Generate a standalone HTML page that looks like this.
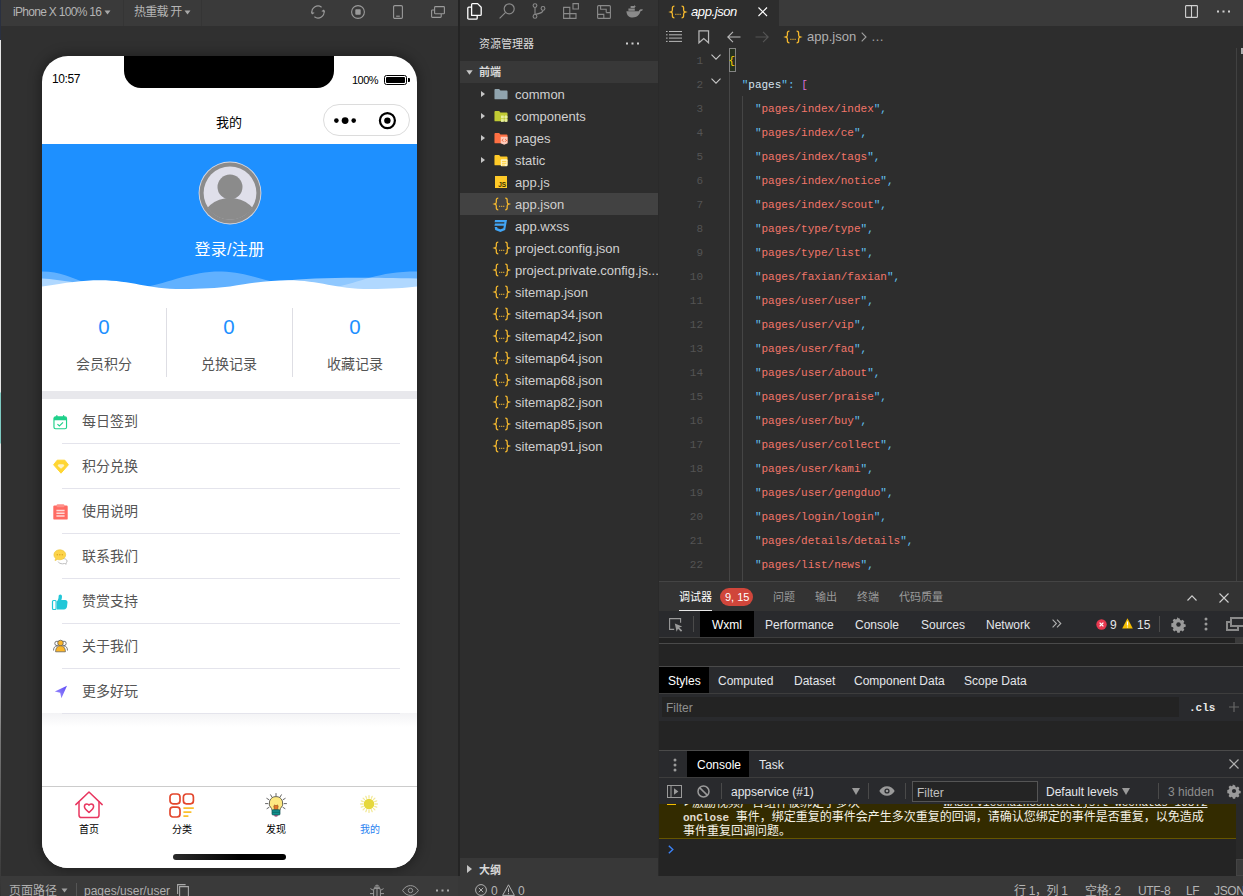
<!DOCTYPE html>
<html lang="zh-CN">
<head>
<meta charset="utf-8">
<title>app.json</title>
<style>
*{box-sizing:border-box;margin:0;padding:0}
html,body{width:1243px;height:896px;overflow:hidden;background:#2e2e2e}
body{font-family:"Liberation Sans","Noto Sans CJK SC",sans-serif;font-size:12px;color:#ccc;position:relative}
div,span,svg,i{position:absolute;display:block}
.t{white-space:nowrap;line-height:20px;height:20px}
.c{transform:translateX(-50%)}
svg{overflow:visible}
/* simulator */
#sim{left:0;top:0;width:458px;height:896px;background:#303030;overflow:hidden}
#simbar{left:0;top:0;width:458px;height:26px;background:#3a3a3a}
#simbar .t{font-size:12px;color:#b4b4b4;top:2px}
#simfoot{left:0;top:876px;width:458px;height:20px;background:#3a3a3a}
#simfoot .t{font-size:12px;color:#b0b0b0;top:5px}
#phone{left:42px;top:56px;width:375px;height:812px;background:#fff;border-radius:26px;overflow:hidden}
#pshadow{left:42px;top:56px;width:375px;height:812px;border-radius:26px;box-shadow:0 0 12px 2px rgba(0,0,0,.35)}
#notch{left:82px;top:0;width:210px;height:32px;background:#000;border-radius:0 0 17px 17px}
#hero{left:0;top:88px;width:375px;height:146px;background:#1e90ff}
#phone .t{color:#000}
.num{font-size:20.500px;color:#1e90ff !important;top:261.300px}
.lab{font-size:14px;color:#555 !important;top:298px}
.vdiv{width:1px;top:252px;height:69px;background:#dedee4}
#gap{left:0;top:335px;width:375px;height:8px;background:#e8e8ec}
.row{left:0;width:375px;height:45px}
.row .t{left:40px;top:12px;font-size:14px;color:#555 !important}
.row i{left:20px;right:17px;bottom:0;height:1px;background:#e4e4ec}
.row svg{left:10.500px;top:15.200px}
#tabbar{left:0;top:730px;width:375px;height:82px;background:#fff;border-top:1px solid #ccc}
#tabbar .t{font-size:10px;top:33px}
/* middle */
#mid{left:458px;top:0;width:200px;height:896px;background:#2d2d2d;overflow:hidden}
#mid .edge{left:0;top:0;width:1.500px;height:896px;background:#242424}
#act{left:2px;top:0;width:198px;height:26px;background:#333}
.tree{left:2px;width:198px;height:22px}
.tree .t{left:55px;top:2px;font-size:13px;color:#d0d0d0}
.tree svg.ic{left:34px;top:4px}
.tree .arr{left:20.500px;top:8px;width:0;height:0;border-left:4px solid #c5c5c5;border-top:3.5px solid transparent;border-bottom:3.5px solid transparent}
.hdr{left:2px;width:198px;height:22px;background:#383838}
.hdr .t{left:19px;top:1px;font-size:11px;font-weight:bold;color:#d8d8d8}
/* editor */
#ed{left:658px;top:0;width:585px;height:581px;background:#2d2d2d;overflow:hidden}
#tabs{left:0;top:0;width:585px;height:26px;background:#3a3a3a}
#tab1{left:1px;top:0;width:120px;height:26px;background:#2d2d2d}
.ln{left:0;width:585px;height:24px;font-family:"Liberation Mono",monospace;font-size:11px;line-height:24px;white-space:pre}
.ln b{position:absolute;top:.5px;left:27px;width:18px;text-align:right;font-weight:normal;color:#545454;font-size:11px}
.ln u{position:absolute;top:.5px;left:70.5px;text-decoration:none;color:#62c0f0}
.ln u s{text-decoration:none;color:#f2766a}
.ln u em{font-style:normal;color:#d6e2ee}
/* debugger */
#dbg{left:658px;top:582px;width:585px;height:294px;background:#242424;overflow:hidden}
#dbg .t{font-size:12px;color:#e4e6ea}
#status{left:458px;top:876px;width:785px;height:20px;background:#383838}
#status .t{font-size:12px;color:#b4b4b4;top:5px;letter-spacing:-.35px}
</style>
</head>
<body>
<div id="sim">
  <div id="simbar">
    <span class="t" style="left:13px;letter-spacing:-.7px">iPhone X 100% 16</span>
    <svg style="left:104px;top:10px" width="8" height="5" viewBox="0 0 8 5"><path d="M0.5 0.5h6L3.5 4.5z" fill="#a8a8a8"/></svg>
    <span style="left:123px;top:0;width:1px;height:26px;background:#353535"></span>
    <span class="t" style="left:134px;letter-spacing:-.8px">热重载 开</span>
    <svg style="left:184px;top:10px" width="8" height="5" viewBox="0 0 8 5"><path d="M0.5 0.5h6L3.5 4.5z" fill="#a8a8a8"/></svg>
    <span style="left:201px;top:0;width:1px;height:26px;background:#353535"></span>
    <svg style="left:311px;top:5px" width="14" height="14" viewBox="0 0 14 14" fill="none" stroke="#9a9a9a" stroke-width="1.100"><path d="M1.200 8.600A6 6 0 0 1 10.600 2.200M12.800 5.400A6 6 0 0 1 3.400 11.800"/><path d="M0.400 6.600l.9 2.200 1.900-1.200M13.600 7.400l-.9-2.200-1.900 1.200"/></svg>
    <svg style="left:351px;top:5px" width="14" height="14" viewBox="0 0 14 14"><circle cx="7" cy="7" r="6.4" fill="none" stroke="#9a9a9a" stroke-width="1.1"/><rect x="4.3" y="4.3" width="5.4" height="5.4" rx=".8" fill="#9a9a9a"/></svg>
    <svg style="left:393px;top:5px" width="10" height="14" viewBox="0 0 10 14" fill="none" stroke="#9a9a9a" stroke-width="1.1"><rect x=".6" y=".6" width="8.8" height="12.8" rx="1.2"/><path d="M3.2 11.2h3.6"/></svg>
    <svg style="left:431px;top:6px" width="14" height="12" viewBox="0 0 14 12" fill="none" stroke="#9a9a9a" stroke-width="1.1"><rect x="3.6" y=".6" width="9.8" height="7.2" rx=".8"/><path d="M3.4 4H1.4a.8.8 0 0 0-.8.8v5.8a.8.8 0 0 0 .8.8h8a.8.8 0 0 0 .8-.8V8"/></svg>
  </div>
  <div id="pshadow"></div>
  <div id="phone">
    <div id="notch"></div>
    <span class="t" style="left:10px;top:13px;font-size:12px;letter-spacing:-.4px">10:57</span>
    <span class="t" style="left:310px;top:14px;font-size:11px;letter-spacing:-.5px">100%</span>
    <span style="left:342px;top:19px;width:23px;height:10px;border:1px solid #000;border-radius:2.5px"></span>
    <span style="left:344px;top:21px;width:19px;height:6px;background:#000;border-radius:1px"></span>
    <span style="left:366px;top:22px;width:2px;height:4px;background:#000;border-radius:0 1px 1px 0"></span>
    <span class="t c" style="left:187px;top:56.500px;font-size:13px">我的</span>
    <div style="left:281px;top:48px;width:87px;height:32px;border:1px solid #dcdcdc;border-radius:16px;background:#fff"></div>
    <svg style="left:281px;top:48px" width="87" height="32" viewBox="0 0 87 32"><circle cx="13.4" cy="16.6" r="2.3"/><circle cx="22.1" cy="16.6" r="3.4"/><circle cx="30.7" cy="16.6" r="2.3"/><circle cx="64.4" cy="16.6" r="7.5" fill="none" stroke="#000" stroke-width="2.200"/><circle cx="64.4" cy="16.6" r="3.2"/></svg>
    <div id="hero"></div>
    <svg style="left:0;top:200px" width="375" height="40" viewBox="0 0 375 40">
      <path d="M0 15.5C18 15.5 30 22 42 26L42 40 0 40zM100 32C130 26 150 15 180 15.5C200 16 215 22 232 26L232 40 100 40zM290 32C320 26 335 15.5 375 15.5L375 40 290 40z" fill="#fff" fill-opacity=".3"/>
      <path d="M0 22.5C10 23 20 24.5 30 26L30 40 0 40zM240 25C270 21.5 310 21 375 22.5L375 40 240 40z" fill="#fff" fill-opacity=".5"/>
      <path d="M0 30.5C25 26.5 40 24.2 58 24.2C90 24.2 105 33 140 33C160 33 175 32 188 30.5C213 26.5 228 24.2 246 24.2C278 24.2 293 33 328 33C348 33 363 32 375 30.5L375 40 0 40z" fill="#fff"/>
    </svg>
    <svg style="left:155.600px;top:105px" width="64" height="64" viewBox="0 0 64 64">
      <defs><clipPath id="avc"><circle cx="32" cy="32" r="26.800"/></clipPath></defs>
      <circle cx="32" cy="32" r="31.400" fill="#d9d9e2"/>
      <circle cx="32" cy="32" r="30.500" fill="#8b8b8b"/>
      <circle cx="32" cy="32" r="26.400" fill="#dfdfea"/>
      <g clip-path="url(#avc)" fill="#8b8b8b"><circle cx="32" cy="26" r="12.500"/><ellipse cx="32" cy="61" rx="28" ry="24"/></g>
    </svg>
    <span class="t c" style="left:187.500px;top:183.500px;font-size:16px;letter-spacing:.3px;color:#fff !important;color:#fff">登录/注册</span>
    <span class="t c num" style="left:62px">0</span>
    <span class="t c num" style="left:187px">0</span>
    <span class="t c num" style="left:313px">0</span>
    <span class="t c lab" style="left:62px">会员积分</span>
    <span class="t c lab" style="left:187px">兑换记录</span>
    <span class="t c lab" style="left:313px">收藏记录</span>
    <span class="vdiv" style="left:124px"></span>
    <span class="vdiv" style="left:250px"></span>
    <div id="gap"></div>
    <div style="left:0;top:657px;width:375px;height:14px;background:linear-gradient(#f3f3f5,#fff)"></div>
    <div class="row" style="top:343px"><svg width="14.500" height="14.500" viewBox="0 0 15 15" style="top:15.500px"><rect x="1" y="2" width="13" height="12.2" rx="1.6" fill="#fff" stroke="#1fd08a" stroke-width="1.2"/><path d="M1 3.6a1.6 1.6 0 0 1 1.6-1.6h9.800a1.600 1.600 0 0 1 1.600 1.600V5.400H1z" fill="#1fd08a"/><path d="M4 0.800v2M11 0.800v2" stroke="#1fd08a" stroke-width="1.400" stroke-linecap="round"/><path d="M4.600 9.400l2 2 3.800-3.800" fill="none" stroke="#1fd08a" stroke-width="1.200"/></svg><span class="t">每日签到</span><i></i></div>
    <div class="row" style="top:388px"><svg width="16" height="15" viewBox="0 0 16 15"><path d="M4.200 1.200h7.600L15.400 5.800 8 14.200 0.600 5.800z" fill="#ffd633" stroke="#ffd633" stroke-width="1" stroke-linejoin="round"/><path d="M5.600 5.200h4.800l1 1.600L8 9.800 4.600 6.800z" fill="#fff3c4"/></svg><span class="t">积分兑换</span><i></i></div>
    <div class="row" style="top:433px"><svg width="15" height="16" viewBox="0 0 15 16"><rect x="0.300" y="1.600" width="14.400" height="14" rx="1.200" fill="#ff6b63"/><rect x="3.600" y="0.300" width="7.800" height="3" rx="1" fill="#ff8f88"/><path d="M3.400 6.400h8.200M3.400 9.200h8.200M3.400 12h8.200" stroke="#ffd9d6" stroke-width="1.500"/></svg><span class="t">使用说明</span><i></i></div>
    <div class="row" style="top:478px"><svg width="16" height="15" viewBox="0 0 16 15"><path d="M9.500 9.500c2.600 0 4.600 1 4.600 2.600 0 .8-.5 1.400-1.200 1.900l.3 1.200-1.700-.7c-.6.200-1.300.3-2 .3-2 0-3.900-.9-4.400-2.200" fill="#fff" stroke="#b8b8b8" stroke-width=".9"/><path d="M6.800 0.800c3.300 0 5.900 2.200 5.900 5s-2.600 5-5.900 5c-.8 0-1.600-.1-2.300-.4L2 11.600l.6-2.300C1.500 8.400 0.900 7.200 0.900 5.800c0-2.800 2.600-5 5.900-5z" fill="#fdd44a" stroke="#e8c23a" stroke-width=".6"/><circle cx="4.300" cy="5.800" r=".7" fill="#d9a520"/><circle cx="6.800" cy="5.800" r=".7" fill="#d9a520"/><circle cx="9.300" cy="5.800" r=".7" fill="#d9a520"/></svg><span class="t">联系我们</span><i></i></div>
    <div class="row" style="top:523px"><svg width="16" height="16" viewBox="0 0 16 16" style="left:9.500px"><rect x="0.500" y="6.500" width="3.600" height="9" rx="1" fill="#fff" stroke="#22c7d8" stroke-width="1.200"/><path d="M5 7.200c1.200-1.400 1.600-3 1.600-4.800 0-1.200.8-1.900 1.700-1.900 1 0 1.700.8 1.700 2.200 0 1.200-.3 2.300-.7 3.200h4c1.400 0 2.300 1 2.200 2.300l-.5 4.400c-.2 1.700-1.300 2.900-3 2.900H5z" fill="#22c7d8"/></svg><span class="t">赞赏支持</span><i></i></div>
    <div class="row" style="top:568px"><svg width="15" height="14" viewBox="0 0 15 14" style="top:15px"><circle cx="4" cy="4.400" r="2.200" fill="#fff" stroke="#555" stroke-width=".8"/><circle cx="11" cy="4.400" r="2.200" fill="#fff" stroke="#555" stroke-width=".8"/><path d="M0.500 11.500c0-3 1.500-4.500 3.500-4.500M14.500 11.500c0-3-1.500-4.500-3.500-4.500" fill="none" stroke="#555" stroke-width=".8"/><circle cx="7.500" cy="4" r="2.800" fill="#fcb62a" stroke="#555" stroke-width=".7"/><path d="M2.600 12.800c0-4 2-6 4.900-6s4.900 2 4.900 6z" fill="#fcb62a" stroke="#555" stroke-width=".7"/></svg><span class="t">关于我们</span><i></i></div>
    <div class="row" style="top:613px"><svg width="14" height="14" viewBox="0 0 14 14" style="left:11.500px;top:16px"><defs><linearGradient id="pl" x1="1" y1="0" x2="0" y2="1"><stop offset="0" stop-color="#5b48f5"/><stop offset="1" stop-color="#a79bff"/></linearGradient></defs><path d="M13 0.800L0.800 6.400l5.400 1.400 1.200 5.400z" fill="url(#pl)"/></svg><span class="t">更多好玩</span><i></i></div>
    <div id="tabbar">
      <svg style="left:33px;top:4px" width="28" height="28" viewBox="0 0 28 28" fill="none" stroke="#e8365f" stroke-width="1.500" stroke-linecap="round" stroke-linejoin="round"><path d="M0.800 13.600L14 1 27.200 13.600"/><path d="M4 11v13a2.600 2.600 0 0 0 2.600 2.600h14.800a2.600 2.600 0 0 0 2.600-2.600v-13"/><path d="M14 21.400c-2.400-1.800-4.600-3.400-4.600-5.800 0-1.600 1.200-2.700 2.500-2.700.9 0 1.700.5 2.100 1.300.4-.8 1.200-1.300 2.100-1.300 1.300 0 2.500 1.100 2.500 2.700 0 2.400-2.200 4-4.600 5.800z"/></svg>
      <svg style="left:127px;top:6px" width="26" height="25" viewBox="0 0 26 25" fill="none"><rect x="1" y="1" width="10" height="9.800" rx="3" stroke="#e3472d" stroke-width="1.700"/><rect x="14.400" y="1" width="10" height="9.800" rx="3" stroke="#e3472d" stroke-width="1.700"/><rect x="1" y="14.200" width="10" height="9.800" rx="3" stroke="#e3472d" stroke-width="1.700"/><path d="M14.400 15.200h10.400M14.400 19.200h8M14.400 23.200h5" stroke="#fbc02d" stroke-width="1.700"/></svg>
      <svg style="left:223px;top:6px" width="22" height="24" viewBox="0 0 22 24"><g stroke="#666" stroke-width="1" stroke-linecap="round"><path d="M11 0.500v2.400M5.600 1.800l1.200 2M16.400 1.800l-1.200 2M1.800 5.400l2 1.200M20.200 5.400l-2 1.200M0.500 10.600h2.400M21.500 10.600h-2.400M2 15.600l2-1.200M20 15.600l-2-1.200"/></g><path d="M11 3.600a6.800 6.800 0 0 1 4.400 12l-.4 1.800H7l-.4-1.800A6.800 6.800 0 0 1 11 3.600z" fill="#fde982" stroke="#444" stroke-width=".8"/><path d="M9.400 16.800l-.6-4 1.200-1 1 1.200 1-1.200 1.200 1-.6 4z" fill="#e0782a" stroke="#7a3b10" stroke-width=".5"/><rect x="7" y="16.800" width="8" height="5.200" rx="1" fill="#12908e" stroke="#0b4f4e" stroke-width=".7"/><path d="M7.200 19.300h7.600" stroke="#0b5b5a" stroke-width=".7"/><path d="M9 22.200h4l-.8 1.400h-2.400z" fill="#7a3060"/></svg>
      <svg style="left:318px;top:8px" width="18" height="18" viewBox="0 0 18 18"><g stroke="#f3ea9a" stroke-width="1.300" stroke-linecap="round"><path d="M9 0.600v2.200M9 15.200v2.200M0.600 9h2.200M15.200 9h2.200M3.100 3.100l1.500 1.500M13.400 13.400l1.500 1.500M3.100 14.900l1.500-1.500M13.400 4.600l1.500-1.500M5.800 1.300l.8 2M11.400 14.700l.8 2M1.300 12.200l2-.8M14.700 6.600l2-.8M1.300 5.800l2 .8M14.700 11.400l2 .8M12.200 1.300l-.8 2M6.600 14.700l-.8 2"/></g><circle cx="9" cy="9" r="5.300" fill="#e6d83c"/></svg>
      <span class="t c" style="left:47px">首页</span>
      <span class="t c" style="left:140px">分类</span>
      <span class="t c" style="left:234px">发现</span>
      <span class="t c" style="left:328px;color:#2a82f0">我的</span>
    </div>
    <div style="left:131px;top:798px;width:113px;height:6px;border-radius:3px;background:linear-gradient(90deg,#2a2a2a,#000 60%)"></div>
  </div>
  <div id="simfoot">
    <span class="t" style="left:9px">页面路径</span>
    <svg style="left:61px;top:12px" width="8" height="5" viewBox="0 0 8 5"><path d="M0.500 0.500h6L3.500 4.500z" fill="#a0a0a0"/></svg>
    <span style="left:76px;top:7px;width:1px;height:13px;background:#555"></span>
    <span class="t" style="left:84px">pages/user/user</span>
    <svg style="left:177px;top:8px" width="12" height="12" viewBox="0 0 12 12" fill="none" stroke="#a8a8a8" stroke-width="1.100"><path d="M2.600 12V2.600h8.800V12"/><path d="M0.600 10V0.600h8"/></svg>
    <svg style="left:369px;top:7.500px" width="16" height="13" viewBox="0 0 16 13" fill="none" stroke="#9a9a9a" stroke-width="1"><path d="M4.600 13V6.200a3.400 3.400 0 0 1 6.800 0V13M8 2.800V13M5.200 4.400h5.600M6 2.600a2.100 2.100 0 0 1 4 0M4.600 6.400L1.400 4.600M11.400 6.400l3.200-1.800M4.600 9.600H1M11.400 9.600H15M4.600 12l-2.800 1.600M11.400 12l2.800 1.600"/></svg>
    <svg style="left:402px;top:9px" width="17" height="11" viewBox="0 0 17 11" fill="none" stroke="#9a9a9a" stroke-width="1"><path d="M0.600 5.500C2.600 2.200 5.400 0.600 8.500 0.600s5.900 1.600 7.900 4.900c-2 3.300-4.800 4.900-7.900 4.900S2.600 8.800 0.600 5.500z"/><circle cx="8.500" cy="5.500" r="2.200"/></svg>
    <svg style="left:436px;top:13px" width="13" height="3" viewBox="0 0 13 3" fill="#a8a8a8"><rect x="0" y="0.500" width="2" height="2"/><rect x="5.500" y="0.500" width="2" height="2"/><rect x="11" y="0.500" width="2" height="2"/></svg>
  </div>
  <span style="left:0;top:40px;width:1px;height:856px;background:linear-gradient(#e6e6e6 0,#e6e6e6 352px,#7fcbc3 353px,#7fcbc3 403px,#e0e0e0 404px,#dcdcdc 590px,#777 700px,#484848 800px,#333 856px)"></span>
  <span style="left:0;top:0;width:1px;height:40px;background:#2a3040"></span>
</div>
<div id="mid">
<div class="edge"></div>
<div id="act">
<svg style="left:7px;top:3px" width="15" height="17" viewBox="0 0 15 17" fill="none" stroke="#fff" stroke-width="1.300" stroke-linejoin="round"><path d="M4.600 12.400V1.600a1 1 0 0 1 1-1h5l3.600 3.600v7.200a1 1 0 0 1-1 1z"/><path d="M4.400 4.200H1.800a1 1 0 0 0-1 1v10a1 1 0 0 0 1 1h7.400a1 1 0 0 0 1-1v-2.600"/></svg>
<svg style="left:39px;top:3px" width="16" height="16" viewBox="0 0 16 16" fill="none" stroke="#8a8a8a" stroke-width="1.200"><circle cx="10.200" cy="5.800" r="5"/><path d="M6.600 9.400L0.600 15.400"/></svg>
<svg style="left:72px;top:3px" width="14" height="16" viewBox="0 0 14 16" fill="none" stroke="#8a8a8a" stroke-width="1.100"><circle cx="3" cy="2.600" r="1.900"/><circle cx="3" cy="13.400" r="1.900"/><circle cx="11" cy="5.400" r="1.900"/><path d="M3 4.500v7M11 7.300c0 2.600-3 3-8 4.200"/></svg>
<svg style="left:103px;top:3px" width="16" height="16" viewBox="0 0 16 16" fill="none" stroke="#8a8a8a" stroke-width="1.100"><path d="M0.600 4.400h6.200v6.200H0.600zM0.600 10.600h6.200v4.800H0.600zM6.800 10.600H13v4.800H6.800zM10 0.600h5.400v5.400H10z"/></svg>
<svg style="left:137px;top:5px" width="14" height="14" viewBox="0 0 14 14" fill="none" stroke="#8a8a8a" stroke-width="1.100"><rect x=".6" y=".6" width="12.800" height="12.800" rx="1"/><path d="M3.600 0.600v3.600h5.600v3.400M0.600 9.400h6.200v4M9.200 7.600h4.200"/></svg>
<svg style="left:166px;top:5px" width="17" height="13" viewBox="0 0 17 13"><path d="M0.400 6.200h12.400c.4-1.400 1.400-2 2.600-2 .6 0 1.100.1 1.500.4-.4 1-1.300 1.600-2.400 1.700-.8 3.700-3.600 6.200-7.800 6.200-3.600 0-6-2-6.300-6.300z" fill="#8a8a8a"/><path d="M2.400 3.400h6.400v2.400H2.400zM4.600 1h4.200v2H4.600zM8.200 0l1.600 1.400-1.600 1z" fill="#8a8a8a"/></svg>
</div>
<span class="t" style="left:21px;top:34px;font-size:11px;color:#dcdcdc">资源管理器</span>
<svg style="left:168px;top:42px" width="13" height="3" viewBox="0 0 13 3" fill="#d0d0d0"><rect x="0" y="0.500" width="2" height="2"/><rect x="5.500" y="0.500" width="2" height="2"/><rect x="11" y="0.500" width="2" height="2"/></svg>
<div class="hdr" style="top:61px"><svg style="left:6px;top:9px" width="8" height="5" viewBox="0 0 8 5"><path d="M0.300 0.300h6.400L3.500 4.700z" fill="#c5c5c5"/></svg><span class="t">前端</span></div>
<div class="tree" style="top:83px"><span class="arr"></span><svg class="ic" style="top:4.500px" width="14" height="13" viewBox="0 0 15 14" preserveAspectRatio="none"><path d="M0.500 2.200a1 1 0 0 1 1-1h4l1.400 1.600h6.600a1 1 0 0 1 1 1v7.400a1 1 0 0 1-1 1H1.500a1 1 0 0 1-1-1z" fill="#90a4ae"/></svg><span class="t">common</span></div>
<div class="tree" style="top:105px"><span class="arr"></span><svg class="ic" style="top:4.500px" width="14" height="13" viewBox="0 0 15 14" preserveAspectRatio="none"><path d="M0.500 2.200a1 1 0 0 1 1-1h4l1.400 1.600h6.600a1 1 0 0 1 1 1v7.400a1 1 0 0 1-1 1H1.500a1 1 0 0 1-1-1z" fill="#c0ca33"/><g fill="#e6ee9c"><rect x="7.500" y="6" width="3" height="3"/><rect x="11.300" y="6" width="3" height="3" transform="rotate(45 12.8 7.500)"/><rect x="7.500" y="9.800" width="3" height="3"/><rect x="11.300" y="9.800" width="3" height="3"/></g></svg><span class="t">components</span></div>
<div class="tree" style="top:127px"><span class="arr"></span><svg class="ic" style="top:4.500px" width="14" height="13" viewBox="0 0 15 14" preserveAspectRatio="none"><path d="M0.500 2.200a1 1 0 0 1 1-1h4l1.400 1.600h6.600a1 1 0 0 1 1 1v7.400a1 1 0 0 1-1 1H1.500a1 1 0 0 1-1-1z" fill="#ff7043"/><path d="M7.200 5.200h7.300v6.800l-3.600 1.800-3.700-1.800z" fill="#ffccbc"/><path d="M10 7.600L8.600 9l1.400 1.400M12 7.600L13.400 9 12 10.400" fill="none" stroke="#e64a19" stroke-width=".9"/></svg><span class="t">pages</span></div>
<div class="tree" style="top:149px"><span class="arr"></span><svg class="ic" style="top:4.500px" width="14" height="13" viewBox="0 0 15 14" preserveAspectRatio="none"><path d="M0.500 2.200a1 1 0 0 1 1-1h4l1.400 1.600h6.600a1 1 0 0 1 1 1v7.400a1 1 0 0 1-1 1H1.500a1 1 0 0 1-1-1z" fill="#ffca28"/><rect x="7.200" y="5.600" width="7.300" height="7.600" rx="1" fill="#fff3c0"/><path d="M8.600 8h4.600M8.600 10h4.600M8.600 12h3" stroke="#ffca28" stroke-width=".9"/></svg><span class="t">static</span></div>
<div class="tree" style="top:171px"><svg class="ic" width="14" height="14" viewBox="0 0 14 14"><rect x="1" y="1" width="12" height="12" fill="#ffca28"/><text x="4.200" y="11.600" font-family="Liberation Sans,sans-serif" font-size="6.500" font-weight="bold" fill="#3b3000">JS</text></svg><span class="t">app.js</span></div>
<div class="tree" style="top:193px;background:#424242"><svg class="ic" style="left:33.500px" width="15.500" height="14" viewBox="0 0 16 14" preserveAspectRatio="none" fill="none" stroke="#f5b92e" stroke-width="1.300"><path d="M4.400 1.200c-1.500 0-2 .5-2 1.800v2c0 1-.5 1.700-1.600 2 1.100.3 1.600 1 1.600 2v2c0 1.300.5 1.800 2 1.800M11.600 1.200c1.500 0 2 .5 2 1.800v2c0 1 .5 1.700 1.600 2-1.100.3-1.600 1-1.600 2v2c0 1.300-.5 1.800-2 1.800"/><path d="M5.400 9.400h1M7.500 9.400h1M9.600 9.400h1" stroke-width="1.200"/></svg><span class="t">app.json</span></div>
<div class="tree" style="top:215px"><svg class="ic" style="left:32.500px" width="14" height="14" viewBox="0 0 14 14"><path d="M2 1h12l-1.800 10L7.400 13 2.200 11l-.5-3h2.500l.2 1.200 3 1 3-1 .4-2.400H1.400L2 4.600h9.200l.2-1.400H1.600z" fill="#42a5f5"/></svg><span class="t">app.wxss</span></div>
<div class="tree" style="top:237px"><svg class="ic" style="left:33.500px" width="15.500" height="14" viewBox="0 0 16 14" preserveAspectRatio="none" fill="none" stroke="#f5b92e" stroke-width="1.300"><path d="M4.400 1.200c-1.500 0-2 .5-2 1.800v2c0 1-.5 1.700-1.600 2 1.100.3 1.600 1 1.600 2v2c0 1.300.5 1.800 2 1.800M11.600 1.200c1.500 0 2 .5 2 1.800v2c0 1 .5 1.700 1.600 2-1.100.3-1.600 1-1.600 2v2c0 1.300-.5 1.800-2 1.800"/><path d="M5.400 9.400h1M7.500 9.400h1M9.600 9.400h1" stroke-width="1.200"/></svg><span class="t">project.config.json</span></div>
<div class="tree" style="top:259px"><svg class="ic" style="left:33.500px" width="15.500" height="14" viewBox="0 0 16 14" preserveAspectRatio="none" fill="none" stroke="#f5b92e" stroke-width="1.300"><path d="M4.400 1.200c-1.500 0-2 .5-2 1.800v2c0 1-.5 1.700-1.600 2 1.100.3 1.600 1 1.600 2v2c0 1.300.5 1.800 2 1.800M11.600 1.200c1.500 0 2 .5 2 1.800v2c0 1 .5 1.700 1.600 2-1.100.3-1.600 1-1.600 2v2c0 1.300-.5 1.800-2 1.800"/><path d="M5.400 9.400h1M7.500 9.400h1M9.600 9.400h1" stroke-width="1.200"/></svg><span class="t">project.private.config.js...</span></div>
<div class="tree" style="top:281px"><svg class="ic" style="left:33.500px" width="15.500" height="14" viewBox="0 0 16 14" preserveAspectRatio="none" fill="none" stroke="#f5b92e" stroke-width="1.300"><path d="M4.400 1.200c-1.500 0-2 .5-2 1.800v2c0 1-.5 1.700-1.600 2 1.100.3 1.600 1 1.600 2v2c0 1.300.5 1.800 2 1.800M11.600 1.200c1.500 0 2 .5 2 1.800v2c0 1 .5 1.700 1.600 2-1.100.3-1.600 1-1.600 2v2c0 1.300-.5 1.800-2 1.800"/><path d="M5.400 9.400h1M7.500 9.400h1M9.600 9.400h1" stroke-width="1.200"/></svg><span class="t">sitemap.json</span></div>
<div class="tree" style="top:303px"><svg class="ic" style="left:33.500px" width="15.500" height="14" viewBox="0 0 16 14" preserveAspectRatio="none" fill="none" stroke="#f5b92e" stroke-width="1.300"><path d="M4.400 1.200c-1.500 0-2 .5-2 1.800v2c0 1-.5 1.700-1.600 2 1.100.3 1.600 1 1.600 2v2c0 1.300.5 1.800 2 1.800M11.600 1.200c1.500 0 2 .5 2 1.800v2c0 1 .5 1.700 1.600 2-1.100.3-1.600 1-1.600 2v2c0 1.300-.5 1.800-2 1.800"/><path d="M5.400 9.400h1M7.500 9.400h1M9.600 9.400h1" stroke-width="1.200"/></svg><span class="t">sitemap34.json</span></div>
<div class="tree" style="top:325px"><svg class="ic" style="left:33.500px" width="15.500" height="14" viewBox="0 0 16 14" preserveAspectRatio="none" fill="none" stroke="#f5b92e" stroke-width="1.300"><path d="M4.400 1.200c-1.500 0-2 .5-2 1.800v2c0 1-.5 1.700-1.600 2 1.100.3 1.600 1 1.600 2v2c0 1.300.5 1.800 2 1.800M11.600 1.200c1.500 0 2 .5 2 1.800v2c0 1 .5 1.700 1.600 2-1.100.3-1.600 1-1.600 2v2c0 1.300-.5 1.800-2 1.800"/><path d="M5.400 9.400h1M7.500 9.400h1M9.600 9.400h1" stroke-width="1.200"/></svg><span class="t">sitemap42.json</span></div>
<div class="tree" style="top:347px"><svg class="ic" style="left:33.500px" width="15.500" height="14" viewBox="0 0 16 14" preserveAspectRatio="none" fill="none" stroke="#f5b92e" stroke-width="1.300"><path d="M4.400 1.200c-1.500 0-2 .5-2 1.800v2c0 1-.5 1.700-1.600 2 1.100.3 1.600 1 1.600 2v2c0 1.300.5 1.800 2 1.800M11.600 1.200c1.500 0 2 .5 2 1.800v2c0 1 .5 1.700 1.600 2-1.100.3-1.600 1-1.600 2v2c0 1.300-.5 1.800-2 1.800"/><path d="M5.400 9.400h1M7.500 9.400h1M9.600 9.400h1" stroke-width="1.200"/></svg><span class="t">sitemap64.json</span></div>
<div class="tree" style="top:369px"><svg class="ic" style="left:33.500px" width="15.500" height="14" viewBox="0 0 16 14" preserveAspectRatio="none" fill="none" stroke="#f5b92e" stroke-width="1.300"><path d="M4.400 1.200c-1.500 0-2 .5-2 1.800v2c0 1-.5 1.700-1.600 2 1.100.3 1.600 1 1.600 2v2c0 1.300.5 1.800 2 1.800M11.600 1.200c1.500 0 2 .5 2 1.800v2c0 1 .5 1.700 1.600 2-1.100.3-1.600 1-1.600 2v2c0 1.300-.5 1.800-2 1.800"/><path d="M5.400 9.400h1M7.500 9.400h1M9.600 9.400h1" stroke-width="1.200"/></svg><span class="t">sitemap68.json</span></div>
<div class="tree" style="top:391px"><svg class="ic" style="left:33.500px" width="15.500" height="14" viewBox="0 0 16 14" preserveAspectRatio="none" fill="none" stroke="#f5b92e" stroke-width="1.300"><path d="M4.400 1.200c-1.500 0-2 .5-2 1.800v2c0 1-.5 1.700-1.600 2 1.100.3 1.600 1 1.600 2v2c0 1.300.5 1.800 2 1.800M11.600 1.200c1.500 0 2 .5 2 1.800v2c0 1 .5 1.700 1.600 2-1.100.3-1.600 1-1.600 2v2c0 1.300-.5 1.800-2 1.800"/><path d="M5.400 9.400h1M7.500 9.400h1M9.600 9.400h1" stroke-width="1.200"/></svg><span class="t">sitemap82.json</span></div>
<div class="tree" style="top:413px"><svg class="ic" style="left:33.500px" width="15.500" height="14" viewBox="0 0 16 14" preserveAspectRatio="none" fill="none" stroke="#f5b92e" stroke-width="1.300"><path d="M4.400 1.200c-1.500 0-2 .5-2 1.800v2c0 1-.5 1.700-1.600 2 1.100.3 1.600 1 1.600 2v2c0 1.300.5 1.800 2 1.800M11.600 1.200c1.500 0 2 .5 2 1.800v2c0 1 .5 1.700 1.600 2-1.100.3-1.600 1-1.600 2v2c0 1.300-.5 1.800-2 1.800"/><path d="M5.400 9.400h1M7.500 9.400h1M9.600 9.400h1" stroke-width="1.200"/></svg><span class="t">sitemap85.json</span></div>
<div class="tree" style="top:435px"><svg class="ic" style="left:33.500px" width="15.500" height="14" viewBox="0 0 16 14" preserveAspectRatio="none" fill="none" stroke="#f5b92e" stroke-width="1.300"><path d="M4.400 1.200c-1.500 0-2 .5-2 1.800v2c0 1-.5 1.700-1.600 2 1.100.3 1.600 1 1.600 2v2c0 1.300.5 1.800 2 1.800M11.600 1.200c1.500 0 2 .5 2 1.800v2c0 1 .5 1.700 1.600 2-1.100.3-1.600 1-1.600 2v2c0 1.300-.5 1.800-2 1.800"/><path d="M5.400 9.400h1M7.500 9.400h1M9.600 9.400h1" stroke-width="1.200"/></svg><span class="t">sitemap91.json</span></div>
<div class="hdr" style="top:858px;height:18px"><span class="arr" style="left:7px;top:7px;width:0;height:0;border-left:5px solid #c5c5c5;border-top:4px solid transparent;border-bottom:4px solid transparent"></span><span class="t" style="top:2px">大纲</span></div>
</div>
<div id="ed">
<div id="tabs">
<div id="tab1">
<svg style="left:11px;top:5px" width="16" height="14" viewBox="0 0 16 14" fill="none" stroke="#f5b92e" stroke-width="1.300"><path d="M4.400 1.200c-1.500 0-2 .5-2 1.800v2c0 1-.5 1.700-1.600 2 1.100.3 1.600 1 1.600 2v2c0 1.300.5 1.800 2 1.800M11.600 1.200c1.500 0 2 .5 2 1.800v2c0 1 .5 1.700 1.600 2-1.100.3-1.600 1-1.600 2v2c0 1.300-.5 1.800-2 1.800"/><path d="M5.400 9.400h1M7.500 9.400h1M9.600 9.400h1" stroke-width="1.200"/></svg>
<span class="t" style="left:32px;top:2px;font-size:13px;font-style:italic;letter-spacing:-.4px;color:#fff">app.json</span>
<svg style="left:98.500px;top:7px" width="9.500" height="9.500" viewBox="0 0 10 10" stroke="#fff" stroke-width="1.200" fill="none"><path d="M0.500 0.500l9 9M9.500 0.500l-9 9"/></svg>
</div>
<svg style="left:527px;top:4.500px" width="13" height="13" viewBox="0 0 13 13" fill="none" stroke="#d0d0d0" stroke-width="1.100"><rect x=".6" y=".6" width="11.800" height="11.800" rx=".6"/><path d="M6.500 0.600v11.800"/></svg>
<svg style="left:559px;top:9.500px" width="13" height="3" viewBox="0 0 13 3" fill="#d0d0d0"><rect x="0" y="0.500" width="2" height="2"/><rect x="5.500" y="0.500" width="2" height="2"/><rect x="11" y="0.500" width="2" height="2"/></svg>
</div>
<svg style="left:8px;top:31px" width="16" height="11" viewBox="0 0 16 11" stroke="#b8b8b8" stroke-width="1" fill="none"><path d="M3 0.500h13M3 3.800h13M3 7.100h13M3 10.400h13M0 0.500h1.600M0 3.800h1.600M0 7.100h1.600M0 10.400h1.600"/></svg>
<svg style="left:40px;top:30px" width="11.500" height="14" viewBox="0 0 12 14" stroke="#b8b8b8" stroke-width="1.300" fill="none" stroke-linejoin="miter"><path d="M1 0.700h10v12.300L6 8.600 1 13z"/></svg>
<svg style="left:69px;top:31px" width="14" height="12" viewBox="0 0 14 12" stroke="#b8b8b8" stroke-width="1.100" fill="none"><path d="M13.500 6H1M6 0.800L0.800 6 6 11.200"/></svg>
<svg style="left:97px;top:31px" width="14" height="12" viewBox="0 0 14 12" stroke="#555" stroke-width="1.100" fill="none"><path d="M0.500 6H13M8 0.800L13.200 6 8 11.200"/></svg>
<svg style="left:127px;top:30px" width="16" height="14" viewBox="0 0 16 14" fill="none" stroke="#f5b92e" stroke-width="1.300"><path d="M4.400 1.200c-1.500 0-2 .5-2 1.800v2c0 1-.5 1.700-1.600 2 1.100.3 1.600 1 1.600 2v2c0 1.300.5 1.800 2 1.800M11.600 1.200c1.500 0 2 .5 2 1.800v2c0 1 .5 1.700 1.600 2-1.100.3-1.600 1-1.600 2v2c0 1.300-.5 1.800-2 1.800"/><path d="M5.400 9.400h1M7.500 9.400h1M9.600 9.400h1" stroke-width="1.200"/></svg>
<span class="t" style="left:149px;top:27px;font-size:13px;color:#b0b0b0">app.json</span>
<svg style="left:203px;top:32px" width="6" height="10" viewBox="0 0 6 10" stroke="#a0a0a0" stroke-width="1.100" fill="none"><path d="M0.700 0.700L5 5 0.700 9.300"/></svg>
<span class="t" style="left:213px;top:27px;font-size:13px;color:#a0a0a0">…</span>
<span style="left:71px;top:72px;width:1px;height:510px;background:#454545"></span>
<span style="left:84px;top:96px;width:1px;height:486px;background:#454545"></span>
<span style="left:578px;top:48px;width:1px;height:534px;background:#414141"></span>
<span style="left:583px;top:48px;width:2px;height:6px;background:#b0b0b0"></span>
<span style="left:71px;top:48px;width:7px;height:24px;border:1px solid #848484;background:#26301f"></span>
<svg style="left:53px;top:54px" width="10" height="6" viewBox="0 0 10 6" stroke="#c8c8c8" stroke-width="1.100" fill="none"><path d="M0.500 0.600L5 5.200 9.500 0.600"/></svg>
<svg style="left:53px;top:78px" width="10" height="6" viewBox="0 0 10 6" stroke="#c8c8c8" stroke-width="1.100" fill="none"><path d="M0.500 0.600L5 5.200 9.500 0.600"/></svg>
<div class="ln" style="top:48px"><b>1</b><u><span style="color:#ffd700;position:static;display:inline">{</span></u></div>
<div class="ln" style="top:72px"><b>2</b><u>  "<em>pages</em>": <span style="color:#da70d6;position:static;display:inline">[</span></u></div>
<div class="ln" style="top:96px"><b>3</b><u>    "<s>pages/index/index</s>",</u></div>
<div class="ln" style="top:120px"><b>4</b><u>    "<s>pages/index/ce</s>",</u></div>
<div class="ln" style="top:144px"><b>5</b><u>    "<s>pages/index/tags</s>",</u></div>
<div class="ln" style="top:168px"><b>6</b><u>    "<s>pages/index/notice</s>",</u></div>
<div class="ln" style="top:192px"><b>7</b><u>    "<s>pages/index/scout</s>",</u></div>
<div class="ln" style="top:216px"><b>8</b><u>    "<s>pages/type/type</s>",</u></div>
<div class="ln" style="top:240px"><b>9</b><u>    "<s>pages/type/list</s>",</u></div>
<div class="ln" style="top:264px"><b>10</b><u>    "<s>pages/faxian/faxian</s>",</u></div>
<div class="ln" style="top:288px"><b>11</b><u>    "<s>pages/user/user</s>",</u></div>
<div class="ln" style="top:312px"><b>12</b><u>    "<s>pages/user/vip</s>",</u></div>
<div class="ln" style="top:336px"><b>13</b><u>    "<s>pages/user/faq</s>",</u></div>
<div class="ln" style="top:360px"><b>14</b><u>    "<s>pages/user/about</s>",</u></div>
<div class="ln" style="top:384px"><b>15</b><u>    "<s>pages/user/praise</s>",</u></div>
<div class="ln" style="top:408px"><b>16</b><u>    "<s>pages/user/buy</s>",</u></div>
<div class="ln" style="top:432px"><b>17</b><u>    "<s>pages/user/collect</s>",</u></div>
<div class="ln" style="top:456px"><b>18</b><u>    "<s>pages/user/kami</s>",</u></div>
<div class="ln" style="top:480px"><b>19</b><u>    "<s>pages/user/gengduo</s>",</u></div>
<div class="ln" style="top:504px"><b>20</b><u>    "<s>pages/login/login</s>",</u></div>
<div class="ln" style="top:528px"><b>21</b><u>    "<s>pages/details/details</s>",</u></div>
<div class="ln" style="top:552px"><b>22</b><u>    "<s>pages/list/news</s>",</u></div>
</div>
<div id="dbg">
<div style="left:0;top:0;width:585px;height:29px;background:#333"></div>
<span class="t" style="left:21px;top:5px;font-size:11px;color:#fff">调试器</span>
<span style="left:21px;top:28px;width:33px;height:1px;background:#e8e8e8"></span>
<span style="left:62px;top:6px;width:33px;height:18px;border-radius:9px;background:#d0463b"></span>
<span class="t" style="left:67px;top:5px;font-size:11px;color:#fff">9, 15</span>
<span class="t" style="left:115px;top:5px;font-size:11px;color:#9a9a9a">问题</span>
<span class="t" style="left:157px;top:5px;font-size:11px;color:#9a9a9a">输出</span>
<span class="t" style="left:199px;top:5px;font-size:11px;color:#9a9a9a">终端</span>
<span class="t" style="left:241px;top:5px;font-size:11px;color:#9a9a9a">代码质量</span>
<svg style="left:529px;top:13px" width="10" height="6" viewBox="0 0 10 6" stroke="#d0d0d0" stroke-width="1.100" fill="none"><path d="M0.500 5.500L5 0.800 9.500 5.500"/></svg>
<svg style="left:561px;top:11px" width="10" height="10" viewBox="0 0 10 10" stroke="#d0d0d0" stroke-width="1.100" fill="none"><path d="M0.500 0.500l9 9M9.500 0.500l-9 9"/></svg>
<div style="left:0;top:29px;width:585px;height:26px;background:#292a2d"></div>
<div style="left:0;top:55px;width:585px;height:1px;background:#3d3d3d"></div>
<div style="left:0;top:56px;width:585px;height:5px;background:#222"></div>
<div style="left:577px;top:56px;width:8px;height:5px;background:#3a3a3a"></div>
<div style="left:0;top:61px;width:585px;height:1px;background:#4a4a4a"></div>
<svg style="left:11px;top:36px" width="14" height="14" viewBox="0 0 14 14"><path d="M5.200 11.400H0.600V0.600h11v4.200" fill="none" stroke="#9a9a9a" stroke-width="1.100"/><path d="M5.800 5.400l7.400 3-3 1.200 3 3-1.200 1.200-3-3-1.400 3z" fill="#9a9a9a"/></svg>
<span style="left:35px;top:34px;width:1px;height:16px;background:#4a4a4a"></span>
<div style="left:42px;top:29px;width:54px;height:26px;background:#000"></div>
<span class="t" style="left:54px;top:33px;color:#fff">Wxml</span>
<span class="t" style="left:107px;top:33px">Performance</span>
<span class="t" style="left:197px;top:33px">Console</span>
<span class="t" style="left:263px;top:33px">Sources</span>
<span class="t" style="left:328px;top:33px">Network</span>
<svg style="left:394px;top:37px" width="10" height="9" viewBox="0 0 10 9" stroke="#b0b0b0" stroke-width="1.100" fill="none"><path d="M0.600 0.600L4.400 4.500 0.600 8.400M5 0.600L8.800 4.500 5 8.400"/></svg>
<svg style="left:438px;top:37px" width="11" height="11" viewBox="0 0 11 11"><circle cx="5.500" cy="5.500" r="5.200" fill="#e8384f"/><path d="M3.600 3.600l3.800 3.800M7.400 3.600L3.600 7.400" stroke="#fff" stroke-width="1.300"/></svg>
<span class="t" style="left:452px;top:33px">9</span>
<svg style="left:464px;top:36px" width="11" height="11" viewBox="0 0 11 11"><path d="M5.500 0.300L10.800 10.600H0.200z" fill="#f4bd00"/><path d="M5.500 3.600v3.800M5.500 8.400v1.200" stroke="#fff" stroke-width="1.200"/></svg>
<span class="t" style="left:479px;top:33px">15</span>
<span style="left:501px;top:34px;width:1px;height:16px;background:#4a4a4a"></span>
<svg style="left:512.500px;top:34.500px" width="15" height="15" viewBox="0 0 16 16"><path d="M8 0.600l1.400.2.500 2 1.300.6 1.800-1 1.900 1.900-1 1.800.6 1.300 2 .5v2.800l-2 .5-.6 1.300 1 1.800-1.900 1.900-1.800-1-1.300.6-.5 2H6.600l-.5-2-1.300-.6-1.800 1-1.900-1.900 1-1.800-.6-1.300-2-.5V6.600l2-.5.600-1.300-1-1.800L3 1.100l1.800 1 1.300-.6.500-2z" transform="translate(0.800,0.800) scale(.9)" fill="#9a9a9a"/><circle cx="8" cy="8" r="2.400" fill="#292a2d"/></svg>
<svg style="left:546px;top:35px" width="4" height="14" viewBox="0 0 4 14" fill="#9a9a9a"><circle cx="2" cy="2" r="1.500"/><circle cx="2" cy="7" r="1.500"/><circle cx="2" cy="12" r="1.500"/></svg>
<svg style="left:568px;top:35px" width="17" height="14" viewBox="0 0 17 14" fill="none" stroke="#8a8a8a" stroke-width="2"><path d="M5 1h13v8H5zM5 5H1v8h11v-4"/></svg>
<div style="left:0;top:84px;width:585px;height:1px;background:#4a4a4a"></div>
<div style="left:0;top:85px;width:585px;height:26px;background:#292a2d"></div>
<div style="left:1px;top:85px;width:50px;height:26px;background:#000"></div>
<span class="t" style="left:10px;top:89px;color:#fff">Styles</span>
<span class="t" style="left:60px;top:89px">Computed</span>
<span class="t" style="left:136px;top:89px">Dataset</span>
<span class="t" style="left:196px;top:89px">Component Data</span>
<span class="t" style="left:306px;top:89px">Scope Data</span>
<div style="left:0;top:111px;width:585px;height:1px;background:#3d3d3d"></div>
<div style="left:0;top:112px;width:585px;height:27px;background:#292a2d"></div>
<div style="left:4px;top:115px;width:517px;height:20px;background:#232323"></div>
<span class="t" style="left:8px;top:116px;color:#8f8f8f">Filter</span>
<span class="t" style="left:531px;top:116px;font-family:'Liberation Mono',monospace;font-weight:bold;font-size:11px;color:#e8e8e8">.cls</span>
<svg style="left:571px;top:120px" width="10" height="10" viewBox="0 0 10 10" stroke="#666" stroke-width="1.200" fill="none"><path d="M5 0v10M0 5h10"/></svg>
<div style="left:0;top:168px;width:585px;height:1px;background:#4a4a4a"></div>
<div style="left:0;top:169px;width:585px;height:26px;background:#292a2d"></div>
<svg style="left:15px;top:176px" width="4" height="14" viewBox="0 0 4 14" fill="#9a9a9a"><circle cx="2" cy="2" r="1.500"/><circle cx="2" cy="7" r="1.500"/><circle cx="2" cy="12" r="1.500"/></svg>
<div style="left:29px;top:169px;width:62px;height:26px;background:#000"></div>
<span class="t" style="left:39px;top:173px;color:#fff">Console</span>
<span class="t" style="left:101px;top:173px">Task</span>
<svg style="left:571px;top:177px" width="10" height="10" viewBox="0 0 10 10" stroke="#b0b0b0" stroke-width="1.200" fill="none"><path d="M0.500 0.500l9 9M9.500 0.500l-9 9"/></svg>
<div style="left:0;top:195px;width:585px;height:1px;background:#3d3d3d"></div>
<div style="left:0;top:196px;width:585px;height:26px;background:#292a2d"></div>
<svg style="left:9px;top:203px" width="15" height="13" viewBox="0 0 15 13"><rect x=".5" y=".5" width="14" height="12" fill="none" stroke="#9a9a9a"/><path d="M4 0.500v12" stroke="#9a9a9a"/><path d="M7 3.200l4.400 3.300L7 9.800z" fill="#9a9a9a"/></svg>
<svg style="left:39px;top:203px" width="13" height="13" viewBox="0 0 13 13" fill="none" stroke="#9a9a9a" stroke-width="1.500"><circle cx="6.500" cy="6.500" r="5.500"/><path d="M2.600 2.600l7.800 7.800"/></svg>
<span style="left:63px;top:201px;width:1px;height:16px;background:#4a4a4a"></span>
<span class="t" style="left:73px;top:200px">appservice (#1)</span>
<svg style="left:194px;top:206px" width="8" height="7" viewBox="0 0 8 7"><path d="M0 0h8L4 7z" fill="#9a9a9a"/></svg>
<span style="left:210px;top:201px;width:1px;height:16px;background:#4a4a4a"></span>
<svg style="left:221px;top:204px" width="16" height="10" viewBox="0 0 16 10"><path d="M0.300 5C2 2 4.800 0.300 8 0.300S14 2 15.700 5C14 8 11.200 9.700 8 9.700S2 8 0.300 5z" fill="#9a9a9a"/><circle cx="8" cy="5" r="2.600" fill="#292a2d"/><circle cx="8" cy="5" r="1.300" fill="#9a9a9a"/></svg>
<span style="left:247px;top:201px;width:1px;height:16px;background:#4a4a4a"></span>
<div style="left:254px;top:199px;width:126px;height:21px;background:#242424;border:1px solid #555"></div>
<span class="t" style="left:259px;top:201px;color:#c0c0c0">Filter</span>
<span class="t" style="left:388px;top:200px">Default levels</span>
<svg style="left:464px;top:206px" width="8" height="7" viewBox="0 0 8 7"><path d="M0 0h8L4 7z" fill="#9a9a9a"/></svg>
<span style="left:500px;top:201px;width:1px;height:16px;background:#4a4a4a"></span>
<span class="t" style="left:510px;top:200px;color:#8e8e8e">3 hidden</span>
<svg style="left:569px;top:201.500px" width="14" height="14" viewBox="0 0 16 16"><path d="M8 0.600l1.400.2.500 2 1.300.6 1.800-1 1.900 1.900-1 1.800.6 1.300 2 .5v2.800l-2 .5-.6 1.300 1 1.800-1.900 1.900-1.800-1-1.300.6-.5 2H6.600l-.5-2-1.300-.6-1.800 1-1.900-1.900 1-1.800-.6-1.300-2-.5V6.600l2-.5.600-1.300-1-1.800L3 1.100l1.800 1 1.300-.6.500-2z" transform="translate(0.800,0.800) scale(.9)" fill="#9a9a9a"/><circle cx="8" cy="8" r="2.400" fill="#292a2d"/></svg>
<div style="left:0;top:222px;width:578px;height:35px;background:#332b00;border-bottom:1px solid #665500;overflow:hidden"><span style="left:9px;top:0;width:9px;height:1px;background:#f4bd00"></span><span class="t" style="left:26px;top:-9px;font-size:7px;line-height:15px;height:15px;color:#f4f1e6">▶</span><span class="t" style="left:34px;top:-8px;font-size:12px;line-height:15px;height:15px;color:#f4f1e6">激励视频广告组件被绑定了多次</span><span class="t" style="right:28.500px;top:-8px;font-size:11px;line-height:15px;height:15px;color:#e8e8e8;text-decoration:underline;font-family:'Liberation Mono',monospace">WAServiceMainContext.js?t=wechat&amp;s=168:2</span><span class="t" style="left:25px;top:6px;font-size:12px;line-height:15px;height:15px;color:#f4f1e6"><span style="position:static;display:inline;font-family:'Liberation Mono',monospace;font-weight:bold;font-size:11px;color:#e2ddd0">onClose </span>事件，绑定重复的事件会产生多次重复的回调，请确认您绑定的事件是否重复，以免造成</span><span class="t" style="left:25px;top:20px;font-size:12px;line-height:15px;height:15px;color:#f4f1e6">事件重复回调问题。</span></div>
<svg style="left:10px;top:263px" width="6" height="9" viewBox="0 0 6 9" stroke="#3b82f6" stroke-width="1.400" fill="none"><path d="M0.800 0.800L4.800 4.500 0.800 8.200"/></svg>
<div style="left:578px;top:222px;width:7px;height:72px;background:#292929"></div>
<div style="left:577.500px;top:277px;width:8px;height:17px;background:#3a3a3a;border:1px solid #444"></div>
</div>
<div id="status">
<svg style="left:17px;top:8px" width="12" height="12" viewBox="0 0 12 12" fill="none" stroke="#b0b0b0" stroke-width="1"><circle cx="6" cy="6" r="5.400"/><path d="M3.800 3.800l4.400 4.400M8.200 3.800L3.800 8.200"/></svg>
<span class="t" style="left:33px">0</span>
<svg style="left:44px;top:8px" width="13" height="12" viewBox="0 0 13 12" fill="none" stroke="#b0b0b0" stroke-width="1"><path d="M6.500 0.800L12.400 11.400H0.600z"/><path d="M6.500 4.400v3.800M6.500 9v1.200"/></svg>
<span class="t" style="left:60px">0</span>
<span class="t" style="left:556px">行 1，列 1</span>
<span class="t" style="left:627px">空格: 2</span>
<span class="t" style="left:680px">UTF-8</span>
<span class="t" style="left:728px">LF</span>
<span class="t" style="left:756px">JSON</span>
</div>
<div style="left:658px;top:0;width:1px;height:876px;background:#2a2a2a"></div>
<div style="left:659px;top:581px;width:584px;height:1px;background:#444"></div>
</body>
</html>
